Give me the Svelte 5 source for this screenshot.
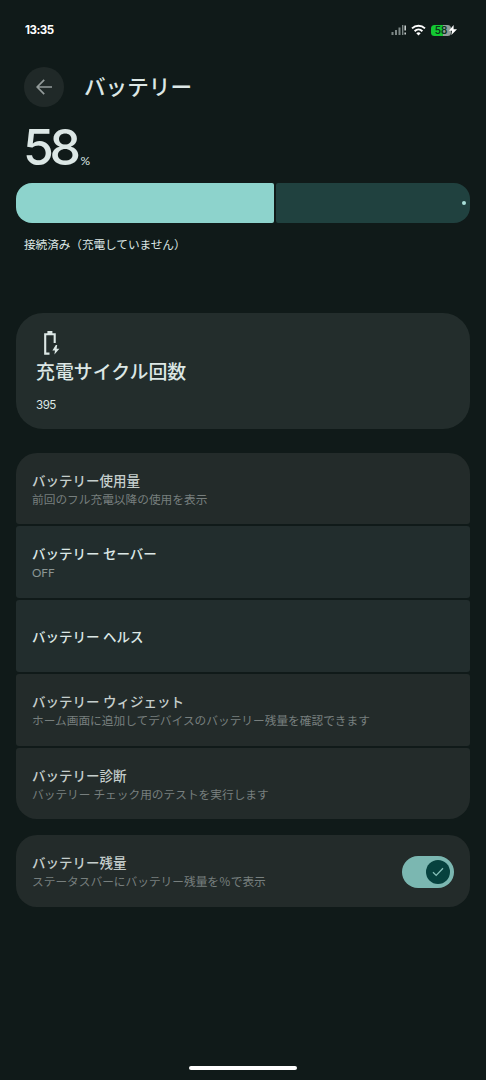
<script lang="ts">
	type Item = { title: string; summary?: string; dim?: boolean };

	const items: Item[] = [
		{ title: 'バッテリー使用量', summary: '前回のフル充電以降の使用を表示', dim: true },
		{ title: 'バッテリー セーバー', summary: 'OFF' },
		{ title: 'バッテリー ヘルス' },
		{
			title: 'バッテリー ウィジェット',
			summary: 'ホーム画面に追加してデバイスのバッテリー残量を確認できます',
			dim: true
		},
		{ title: 'バッテリー診断', summary: 'バッテリー チェック用のテストを実行します', dim: true }
	];

	let level = $state(58);
	let cycles = $state(395);
	let showPercent = $state(true);
</script>

<div class="screen">
	<div class="statusbar">
		<span class="time">13:35</span>
		<div class="status-icons">
			<svg width="16" height="12" viewBox="0 0 16 12">
				<g fill="#7d8786">
					<rect x="0.5" y="8" width="2" height="3" />
					<rect x="4" y="6" width="2" height="5" />
					<rect x="7.5" y="3.5" width="2" height="7.5" />
					<rect x="11" y="1" width="1.4" height="10" />
				</g>
				<g fill="#c5cccb">
					<rect x="13.4" y="1.5" width="1.6" height="5" />
					<rect x="13.4" y="8.5" width="1.6" height="2" />
				</g>
			</svg>
			<svg class="wifi" width="15" height="12" viewBox="0 0 15 12" fill="none" stroke="#fff" stroke-width="1.9">
				<path d="M1 4.4C4.8 0.8 10.2 0.8 14 4.4" />
				<path d="M3.6 7.2C5.9 5 9.1 5 11.4 7.2" />
				<path d="M7.5 11.6L5.3 9.2C6.6 8 8.4 8 9.7 9.2Z" fill="#fff" stroke="none" />
			</svg>
			<div class="battery">
				<span class="battery-body">{level}</span>
				<svg width="8" height="10" viewBox="0 0 8 10"><path d="M4.6 0L0 5.8H3L2.4 10L8 4.2H4.6Z" fill="#fff" /></svg>
			</div>
		</div>
	</div>

	<header>
		<button class="back" aria-label="戻る">
			<svg width="16" height="16" viewBox="0 0 16 16" fill="none" stroke="#939b9a" stroke-width="1.7">
				<path d="M16 8H1.2M8.2 0.9L1.2 8L8.2 15.1" />
			</svg>
		</button>
		<h1>バッテリー</h1>
	</header>

	<section class="level">
		<div class="level-value"><span class="num">{level}</span><span class="unit">%</span></div>
		<div class="bar">
			<div class="bar-fill" style="width: {level * 0.981}%"></div>
			<div class="bar-rest"><i></i></div>
		</div>
		<p>接続済み（充電していません）</p>
	</section>

	<section class="card cycle">
		<svg width="18" height="24" viewBox="0 0 18 24">
			<path d="M7.5 22.6H3.2V3.3H12.7V12" fill="none" stroke="#dce7e5" stroke-width="2.1" />
			<rect x="5.4" y="0" width="5" height="3" fill="#dce7e5" />
			<path d="M13.8 14L10.4 19.6H13L12.4 23.6L17.4 17.8H14.6L15.2 14Z" fill="#dce7e5" />
		</svg>
		<h2>充電サイクル回数</h2>
		<span class="count">{cycles}</span>
	</section>

	<section class="list">
		{#each items as item}
			<div class="row" class:dim={item.dim}>
				<div class="title">{item.title}</div>
				{#if item.summary}
					<div class="summary">{item.summary}</div>
				{/if}
			</div>
		{/each}
	</section>

	<section class="card toggle-row dim">
		<div>
			<div class="title">バッテリー残量</div>
			<div class="summary">ステータスバーにバッテリー残量を％で表示</div>
		</div>
		<button
			class="switch"
			role="switch"
			aria-checked={showPercent}
			aria-label="バッテリー残量"
			onclick={() => (showPercent = !showPercent)}
		>
			<span class="thumb">
				<svg width="12" height="10" viewBox="0 0 12 10" fill="none" stroke="#86c0b9" stroke-width="1.3">
					<path d="M1 5.2L4.2 8.4L11 1.2" />
				</svg>
			</span>
		</button>
	</section>

	<div class="home"></div>
</div>

<style>
	:global(body) {
		background: #101a19;
	}
	.screen {
		width: 486px;
		height: 1080px;
		box-sizing: border-box;
		padding: 0 16px;
		background: #101a19;
		color: #dce7e5;
		font-family: Lato, 'Noto Sans CJK JP', sans-serif;
		display: flex;
		flex-direction: column;
		overflow: hidden;
	}
	h1,
	h2,
	p {
		margin: 0;
	}
	button {
		border: 0;
		padding: 0;
	}
	svg {
		display: block;
		flex: none;
	}
	.statusbar {
		height: 60px;
		padding: 0 13px 0 9px;
		display: flex;
		align-items: center;
		justify-content: space-between;
		color: #fff;
	}
	.time {
		font: 700 11.5px Inter, sans-serif;
		letter-spacing: -0.45px;
	}
	.status-icons {
		display: flex;
		align-items: center;
	}
	.wifi {
		margin-left: 4px;
	}
	.battery {
		display: flex;
		align-items: center;
		margin-left: 5px;
	}
	.battery-body {
		width: 20px;
		height: 11px;
		border-radius: 3.5px;
		background: linear-gradient(90deg, #13c832 58%, #929b98 58%);
		color: #10331b;
		font: 600 10px/11px Inter, sans-serif;
		text-align: center;
	}
	.battery svg {
		margin-left: -2px;
	}
	header {
		height: 54px;
		padding-left: 8px;
		display: flex;
		align-items: center;
	}
	.back {
		width: 40px;
		height: 40px;
		border-radius: 50%;
		background: #202928;
		display: grid;
		place-items: center;
	}
	h1 {
		margin: -1px 0 0 20px;
		font-size: 21.6px;
		font-weight: 500;
		line-height: 30px;
	}
	.level {
		height: 199px;
	}
	.level-value {
		height: 69px;
		padding-left: 8px;
		display: flex;
		align-items: baseline;
	}
	.num {
		font-family: Inter, sans-serif;
		font-size: 50px;
		font-weight: 500;
		line-height: 66px;
		letter-spacing: -4.4px;
		margin-left: -1px;
	}
	.unit {
		font-size: 12px;
		margin-left: 4px;
	}
	.bar {
		height: 40px;
		display: flex;
		gap: 2px;
	}
	.bar-fill {
		background: #8dd3cc;
		border-radius: 16px 2px 2px 16px;
	}
	.bar-rest {
		flex: 1;
		display: flex;
		align-items: center;
		justify-content: flex-end;
		padding-right: 4px;
		background: #20413f;
		border-radius: 2px 16px 16px 2px;
	}
	.bar-rest i {
		width: 4px;
		height: 4px;
		border-radius: 50%;
		background: #a9dfd9;
	}
	p {
		padding: 12px 0 0 8px;
		font-size: 11.7px;
		line-height: 18px;
		letter-spacing: -0.1px;
	}
	.card {
		background: #232d2c;
		box-sizing: border-box;
	}
	.cycle {
		height: 116px;
		border-radius: 27px;
		padding: 18px 20px 0;
	}
	.cycle svg {
		margin-left: 6px;
	}
	h2 {
		margin-top: 3px;
		font-size: 18.9px;
		font-weight: 500;
		line-height: 28px;
	}
	.count {
		display: block;
		margin-top: 10px;
		font: 400 11.6px/18px Inter, sans-serif;
		letter-spacing: -0.5px;
	}
	.list {
		margin-top: 23.5px;
		display: flex;
		flex-direction: column;
		gap: 2px;
		border-radius: 21px;
		overflow: hidden;
	}
	.row {
		height: 71.8px;
		padding: 1.5px 16px 0;
		border-radius: 3px;
		background: #222d2d;
		display: flex;
		flex-direction: column;
		justify-content: center;
		box-sizing: border-box;
	}
	.row.dim {
		background: #232b2a;
	}
	.title {
		font-size: 13.5px;
		font-weight: 500;
		line-height: 20px;
	}
	.dim .title {
		color: #c5cecc;
	}
	.summary {
		font-size: 11.7px;
		line-height: 17px;
		color: #8b9594;
	}
	.dim .summary {
		color: #777f7e;
	}
	.toggle-row {
		margin-top: 16px;
		height: 72px;
		padding: 1px 16px 0;
		border-radius: 21px;
		background: #232b2a;
		display: flex;
		align-items: center;
		justify-content: space-between;
	}
	.switch {
		width: 52px;
		height: 32px;
		padding: 4px;
		border-radius: 16px;
		background: #7bb7b1;
		display: flex;
		justify-content: flex-end;
	}
	.switch[aria-checked='false'] {
		justify-content: flex-start;
	}
	.thumb {
		width: 24px;
		height: 24px;
		border-radius: 50%;
		background: #06413e;
		display: grid;
		place-items: center;
	}
	.home {
		width: 108px;
		height: 4px;
		margin: auto auto 10px;
		border-radius: 2px;
		background: #fff;
	}
</style>
